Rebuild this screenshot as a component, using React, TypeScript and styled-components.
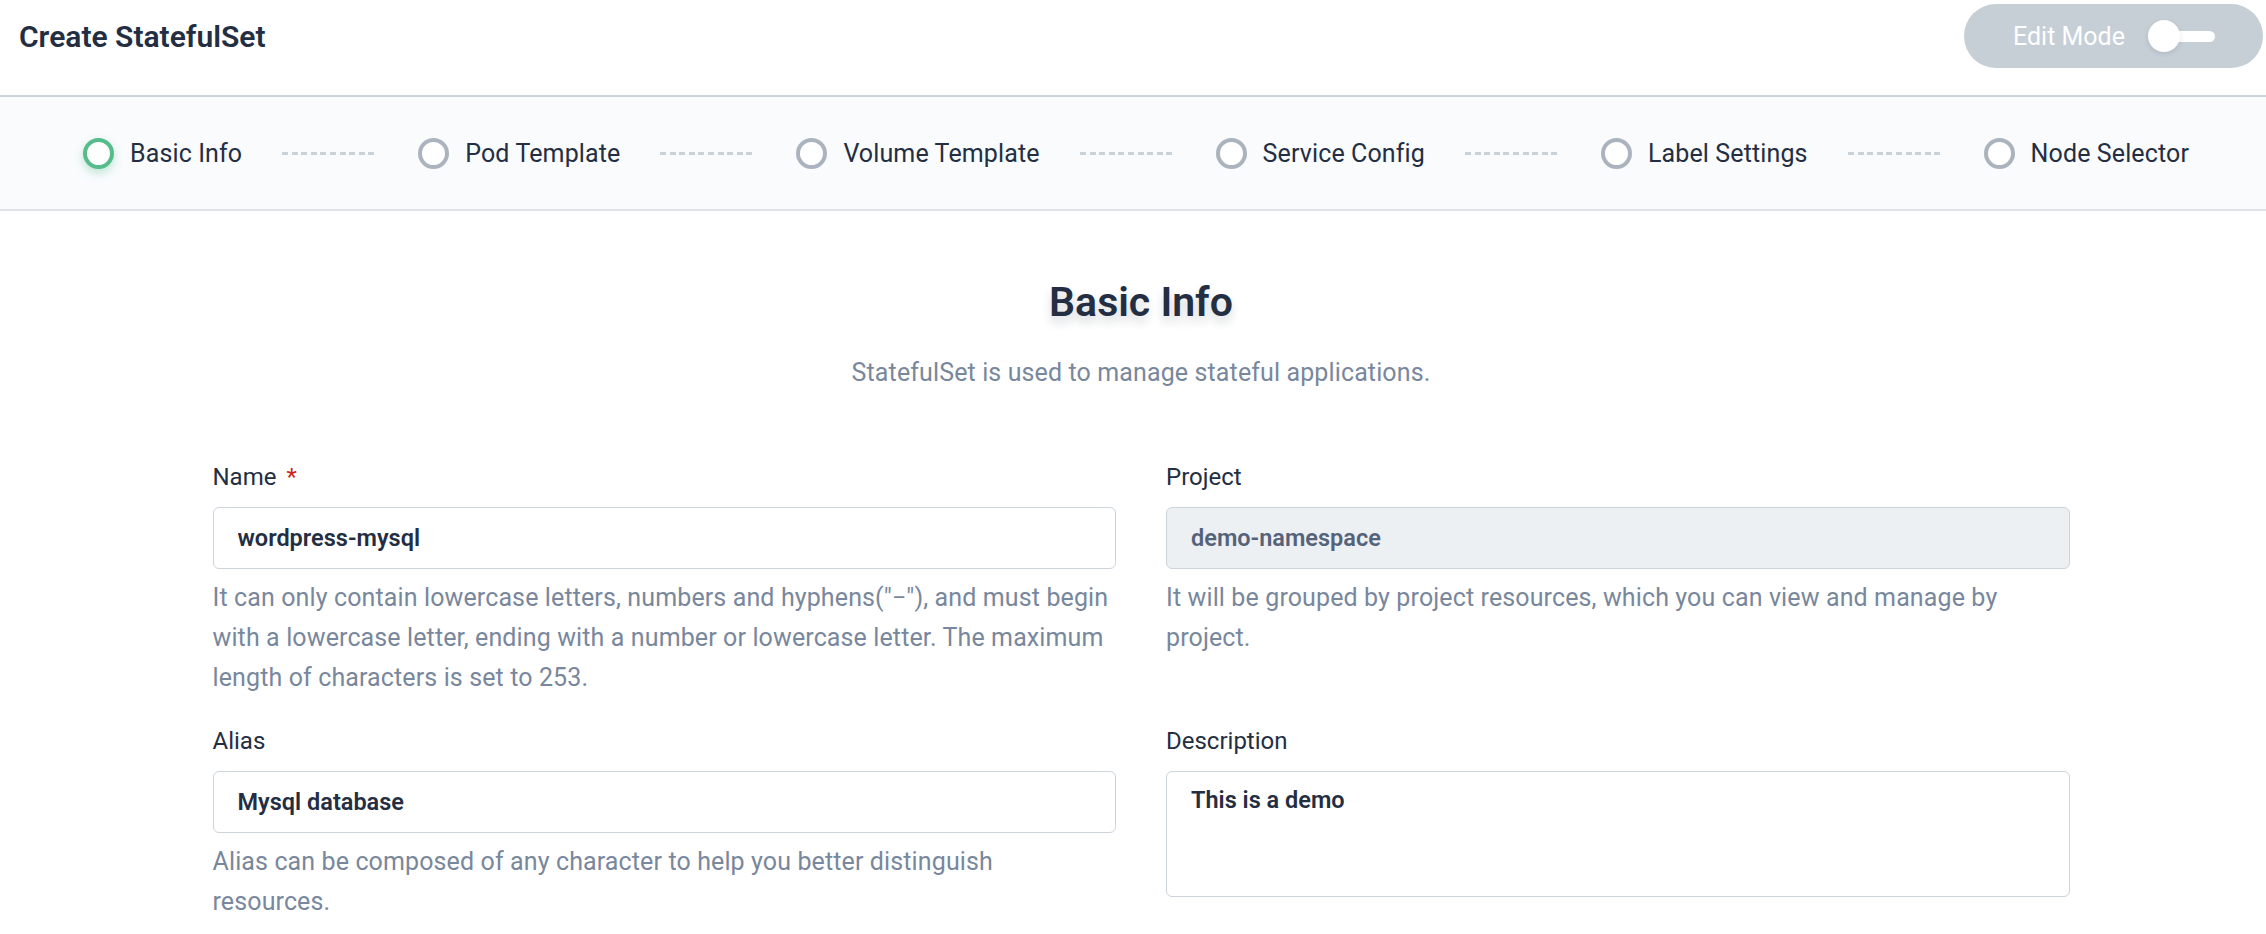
import styled, { createGlobalStyle } from 'styled-components'

const GlobalStyle = createGlobalStyle`
  html, body {
    margin: 0;
    padding: 0;
    background: #ffffff;
  }
  body {
    font-family: Roboto, "Liberation Sans", sans-serif;
    color: #242e42;
  }
  * {
    box-sizing: border-box;
  }
`

const PageSC = styled.div`
  min-height: 934px;
  background: #ffffff;
`

const HeaderSC = styled.header`
  display: flex;
  align-items: flex-start;
  justify-content: space-between;
  height: 97px;
  padding: 4px 3px 0 19px;
  border-bottom: 2px solid #ccd3db;
  background: #ffffff;
`

const TitleSC = styled.h1`
  margin: 0;
  font-size: 30px;
  line-height: 66px;
  font-weight: 600;
  color: #242e42;
`

const EditModeSC = styled.button`
  display: flex;
  align-items: center;
  column-gap: 25px;
  height: 64px;
  width: 299px;
  padding: 0 48px 0 49px;
  border: none;
  border-radius: 32px;
  background: #c6ced6;
  color: #ffffff;
  font-family: inherit;
  font-size: 25px;
  cursor: pointer;
`

const ToggleTrackSC = styled.span`
  display: flex;
  align-items: center;
  flex: 1;
  height: 11px;
  border-radius: 6px;
  background: #ffffff;
`

const ToggleKnobSC = styled.span`
  flex-shrink: 0;
  width: 32px;
  height: 32px;
  margin-left: -2px;
  border-radius: 50%;
  background: #ffffff;
  box-shadow: 0 2px 5px rgba(36, 46, 66, 0.12);
`

const StepperSC = styled.nav`
  display: flex;
  align-items: center;
  justify-content: center;
  height: 114px;
  padding-left: 6px;
  border-bottom: 2px solid #dde3e9;
  background: #f9fbfd;
`

const StepSC = styled.div`
  display: flex;
  align-items: center;
  column-gap: 16px;
  font-size: 25px;
  letter-spacing: 0.12px;
  color: #242e42;
  white-space: nowrap;
`

const StepDotSC = styled.span<{ $active?: boolean }>`
  width: 31px;
  height: 31px;
  border-radius: 50%;
  border: 4px solid ${({ $active }) => ($active ? '#55bc8a' : '#abb4be')};
  background: #ffffff;
  box-shadow: ${({ $active }) =>
    $active ? '0 4px 8px rgba(85, 188, 138, 0.35)' : 'none'};
`

const ConnectorSC = styled.span`
  width: 96px;
  height: 3px;
  margin: 0 40px;
  background: repeating-linear-gradient(
    90deg,
    #c9d1d9 0 6px,
    transparent 6px 9.6px
  );
`

const MainSC = styled.main`
  padding: 63px 0 0 16px;
`

const HeadingSC = styled.h2`
  margin: 0;
  text-align: center;
  font-size: 41px;
  line-height: 56px;
  font-weight: 600;
  color: #242e42;
  text-shadow: 0 6px 10px rgba(36, 46, 66, 0.18);
`

const SubtitleSC = styled.p`
  margin: 23px 0 0;
  text-align: center;
  font-size: 25px;
  letter-spacing: 0.12px;
  line-height: 40px;
  color: #79879c;
`

const FormGridSC = styled.div`
  display: grid;
  grid-template-columns: 1fr 1fr;
  column-gap: 50px;
  row-gap: 23px;
  width: 1857px;
  margin: 64px auto 0;
`

const FieldSC = styled.div`
  display: flex;
  flex-direction: column;
`

const LabelSC = styled.label`
  margin-bottom: 10px;
  font-size: 24px;
  line-height: 40px;
  color: #242e42;
`

const RequiredSC = styled.span`
  margin-left: 10px;
  color: #ca2621;
`

const InputSC = styled.input`
  height: 62px;
  padding: 0 24px;
  border: 1px solid #ccd3db;
  border-radius: 6px;
  background: ${({ disabled }) => (disabled ? '#edf0f3' : '#ffffff')};
  color: ${({ disabled }) => (disabled ? '#55637a' : '#242e42')};
  font-family: inherit;
  font-size: 23.5px;
  font-weight: 600;
  outline: none;
`

const TextAreaSC = styled.textarea`
  height: 126px;
  padding: 8px 24px;
  border: 1px solid #ccd3db;
  border-radius: 6px;
  background: #ffffff;
  color: #242e42;
  font-family: inherit;
  font-size: 23.5px;
  font-weight: 600;
  line-height: 40px;
  resize: none;
  outline: none;
`

const HelpSC = styled.p`
  max-width: 900px;
  margin: 9px 0 0;
  font-size: 25px;
  letter-spacing: 0.12px;
  line-height: 40px;
  color: #79879c;
`

const steps = [
  'Basic Info',
  'Pod Template',
  'Volume Template',
  'Service Config',
  'Label Settings',
  'Node Selector',
]

function StepGroup({
  label,
  active,
  last,
}: {
  label: string
  active: boolean
  last: boolean
}) {
  return (
    <>
      <StepSC>
        <StepDotSC $active={active} />
        {label}
      </StepSC>
      {!last && <ConnectorSC />}
    </>
  )
}

function Stepper({ current }: { current: number }) {
  return (
    <StepperSC>
      {steps.map((step, i) => (
        <StepGroup
          key={step}
          label={step}
          active={i === current}
          last={i === steps.length - 1}
        />
      ))}
    </StepperSC>
  )
}

export default function App() {
  return (
    <PageSC>
      <GlobalStyle />
      <HeaderSC>
        <TitleSC>Create StatefulSet</TitleSC>
        <EditModeSC type="button">
          Edit Mode
          <ToggleTrackSC>
            <ToggleKnobSC />
          </ToggleTrackSC>
        </EditModeSC>
      </HeaderSC>
      <Stepper current={0} />
      <MainSC>
        <HeadingSC>Basic Info</HeadingSC>
        <SubtitleSC>StatefulSet is used to manage stateful applications.</SubtitleSC>
        <FormGridSC>
          <FieldSC>
            <LabelSC>
              Name<RequiredSC>*</RequiredSC>
            </LabelSC>
            <InputSC readOnly value="wordpress-mysql" />
            <HelpSC>
              It can only contain lowercase letters, numbers and hyphens("−"), and must begin
              with a lowercase letter, ending with a number or lowercase letter. The maximum
              length of characters is set to 253.
            </HelpSC>
          </FieldSC>
          <FieldSC>
            <LabelSC>Project</LabelSC>
            <InputSC disabled value="demo-namespace" />
            <HelpSC>
              It will be grouped by project resources, which you can view and manage by project.
            </HelpSC>
          </FieldSC>
          <FieldSC>
            <LabelSC>Alias</LabelSC>
            <InputSC readOnly value="Mysql database" />
            <HelpSC>
              Alias can be composed of any character to help you better distinguish resources.
            </HelpSC>
          </FieldSC>
          <FieldSC>
            <LabelSC>Description</LabelSC>
            <TextAreaSC readOnly value="This is a demo" />
          </FieldSC>
        </FormGridSC>
      </MainSC>
    </PageSC>
  )
}
